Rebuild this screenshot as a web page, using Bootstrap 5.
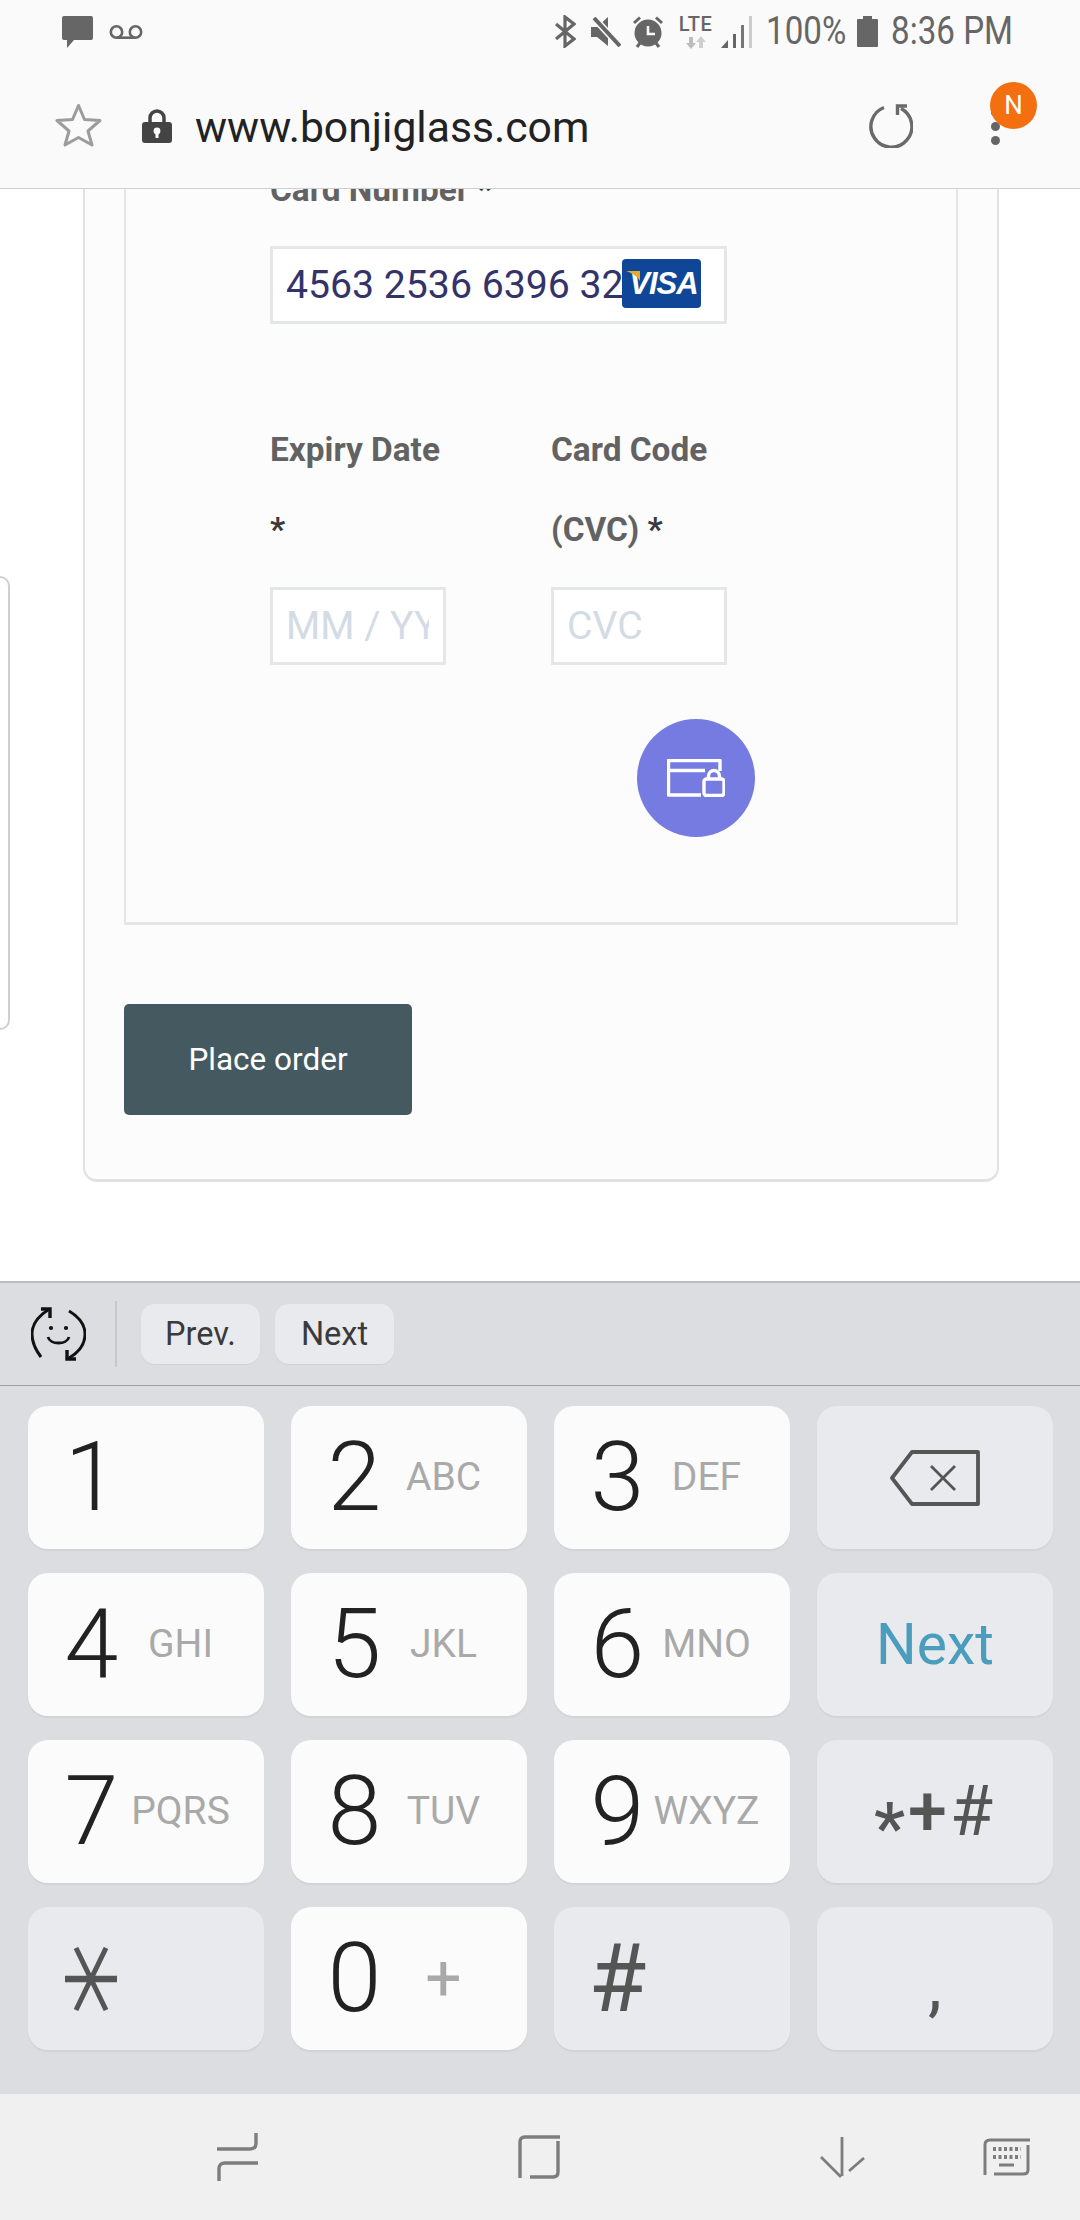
<!DOCTYPE html>
<html lang="en">
<head>
<meta charset="utf-8">
<title>Checkout</title>
<link rel="stylesheet" href="https://cdn.jsdelivr.net/npm/bootstrap@5.3.0/dist/css/bootstrap.min.css">
<script src="https://cdn.jsdelivr.net/npm/bootstrap@5.3.0/dist/js/bootstrap.bundle.min.js"></script>
<style>
html,body{width:1080px;height:2220px;overflow:hidden;margin:0;background:#fff;font-family:Roboto,"Liberation Sans",sans-serif}
.phone{width:1080px;height:2220px}
.chrome-top{height:189px;background:#fafafa;border-bottom:1px solid #cfcfcf}
.statusline{height:63px;padding:0 66px 0 62px}
.sb-text{display:inline-block;font-size:39px;line-height:1;color:#666;transform:scaleX(.85);transform-origin:left center;white-space:nowrap}
.sb-pct{width:79px;margin-left:14px}
.sb-time{width:123px;margin-left:13px}
.lte{width:33px;margin-left:15px}
.lte-word{font-size:20px;font-weight:500;line-height:15px;color:#666;letter-spacing:.6px}
.urlline{height:125px;padding:1px 80px 0 55px}
.star-ico{margin-bottom:2px}
.urltext{font-size:42.7px;color:#222;margin-left:23px;line-height:1;padding-top:3px}
.menu-wrap{width:9px;height:37px;margin-left:78px}
.orangebadge{position:absolute;left:-1px;top:-26px;width:47px;height:47px;background:#f36f10;color:#fff;font-size:26px;font-weight:400}
.viewport{height:1092px;overflow:hidden;background:#fff}
.sliver{width:10px;height:454px;margin-top:387px;border:2px solid #cfcfcf;border-left:0;border-radius:0 12px 12px 0;flex:none}
.outer-box{width:916px;height:1082px;margin:-89px 0 0 73px;background:#fcfcfc;border:2px solid #e2e2e2;border-bottom-width:3px;border-radius:0 0 14px 14px;padding:8px 39px 0;flex:none}
.pay-box{height:815px;border:2px solid #e6e6e6;border-bottom-width:3px;padding:38px 0 0 144px}
.pay-form{width:457px}
.lbl{font-size:33.4px;line-height:80px;font-weight:700;color:#626262;margin:0}
.lbl i{font-style:normal;color:#3a3a3a}
.field{height:78px;border:3px solid #e5e6e8;border-radius:0;background:#fff;font-size:39.2px;color:#33336a;padding:0 14px 0 13px;box-shadow:none}
.field::placeholder{color:#d3dbe4;opacity:1}
.cardfield{margin-top:16px;width:457px}
.visamark{position:absolute;left:352px;top:13px;width:79px;height:49px;background:#0f4697;border-radius:4px;color:#fff;font:italic 700 31px/49px "Liberation Sans",sans-serif;text-align:center;letter-spacing:-1px;padding-left:4px}
.visamark svg{position:absolute;left:4px;top:12px}
.twocol{display:grid;grid-template-columns:176px 176px;column-gap:105px;margin-top:86px}
.twocol .field{margin-top:17px;width:176px}
.lockbtn{width:118px;height:118px;background:#757be0;border-radius:50%;margin:54px 0 0 367px}
.placebtn{width:288px;height:111px;background:#445a60;color:#fff;border:0;border-radius:5px;font-size:31.5px;margin-top:79px;padding:0}
.placebtn:hover{background:#445a60;color:#fff}
.kb-bar{height:105px;background:#dcdde1;border-top:2px solid #bcbdc0;border-bottom:1px solid #9f9f9f;padding-left:31px}
.kb-div{width:2px;height:66px;background:#c6c7ca;margin:0 24px 0 29px}
.kb-chip{height:60px;background:#e9eaee;border-radius:14px;font-size:32.5px;color:#3a3a3a;box-shadow:0 1px 1px #d0d1d5}
.chip-a{width:119px}.chip-b{width:119px;margin-left:15px}
.keypad{height:708px;background:#dcdde1;padding:20px 27px 44px 28px;display:grid;grid-template-columns:repeat(4,236px);grid-auto-rows:143px;column-gap:27px;row-gap:24px}
.k{border-radius:20px;background:#fbfbfb;box-shadow:0 2px 1px #d2d3d7;color:#222}
.k-alt{background:#e9eaee;color:#555}
.dg{width:127px;text-align:center;font-size:97px;font-weight:300;line-height:1}
.lt{width:51px;display:flex;justify-content:center;white-space:nowrap;font-size:39px;color:#a9a9a9;font-weight:400;line-height:1}
.lt-plus{font-size:64px}
.hash{font-weight:400;font-size:94px;color:#555}
.k-next{font-size:57px;color:#4a9dbd}
.k-sym{font-size:70px;letter-spacing:3px}
.k-sym b{display:inline-block;font-weight:500}
.k-sym .low{transform:translateY(17px)}
.k-sym .thin{font-weight:400}
.k-comma{font-size:70px;padding-top:14px}
.navbar-sys{height:126px;background:#f0f0f0}
.ico-recent{margin-left:217px;margin-top:-1px}
.ico-home{margin-left:260px}
.ico-back{margin-left:260px}
.ico-kbd{margin-left:118px}
</style>
</head>
<body>
<div class="phone d-flex flex-column">
  <header class="chrome-top">
    <div class="statusline d-flex align-items-center">
      <svg width="31" height="32" viewBox="0 0 31 32"><path d="M2 0H29a2 2 0 0 1 2 2V22a2 2 0 0 1-2 2H12L5 32V24H2a2 2 0 0 1-2-2V2a2 2 0 0 1 2-2Z" fill="#666"/></svg>
      <svg class="ms-3" width="34" height="14" viewBox="0 0 34 14" fill="none" stroke="#666" stroke-width="2.6"><circle cx="7.5" cy="7" r="5.7"/><circle cx="26.5" cy="7" r="5.7"/><path d="M7.5 12.7H26.5"/></svg>
      <svg class="ms-auto" width="21" height="33" viewBox="0 0 21 33" fill="none" stroke="#666" stroke-width="3.2"><path d="M1 9 19 24 10 31V2L19 9 1 24"/></svg>
      <svg style="margin-left:15px" width="30" height="30" viewBox="0 0 30 30"><path d="M0 10H6L17 0V29L6 20H0Z" fill="#666"/><path d="M3 1 29 29" stroke="#fafafa" stroke-width="7"/><path d="M3 1 29 29" stroke="#666" stroke-width="4"/></svg>
      <svg style="margin-left:11px" width="32" height="32" viewBox="0 0 32 32"><circle cx="16" cy="17" r="13.5" fill="#666"/><path d="M16 10V18H23" fill="none" stroke="#fafafa" stroke-width="2.6"/><path d="M2 7 8 1.500M30 7 24 1.500M5 31 8 27M27 31 24 27" stroke="#666" stroke-width="3"/></svg>
      <div class="lte d-flex flex-column align-items-center" style="margin-top:3px">
        <span class="lte-word">LTE</span>
        <svg class="mt-1" width="20" height="13" viewBox="0 0 20 13"><path d="M5 13 0 7H3V1H7V7H10Z" fill="#bdbdbd"/><path d="M15 0 20 6H17V12H13V6H10Z" fill="#cfcfcf"/></svg>
      </div>
      <svg style="margin-left:9px" width="31" height="32" viewBox="0 0 31 32"><path d="M0 32 7 24V32Z" fill="#666"/><path d="M12 18H15V32H12Z" fill="#666"/><path d="M20 9H23V32H20Z" fill="#777"/><path d="M28 0H31V32H28Z" fill="#ccc"/></svg>
      <span class="sb-text sb-pct">100%</span>
      <svg style="margin-left:12px" width="21" height="31" viewBox="0 0 21 31"><path d="M6 0H15V3H20a1 1 0 0 1 1 1V30a1 1 0 0 1-1 1H1a1 1 0 0 1-1-1V4a1 1 0 0 1 1-1H6Z" fill="#666"/></svg>
      <span class="sb-text sb-time">8:36 PM</span>
    </div>
    <div class="urlline d-flex align-items-center">
      <svg class="star-ico" width="47" height="44" viewBox="0 0 47 44" fill="none" stroke="#9c9c9c" stroke-width="3" stroke-linejoin="round"><path d="M23.500 2.500 29.500 16.500 45 17.500 33 28 37 42 23.500 34.500 10 42 14 28 2 17.500 17.500 16.500Z"/></svg>
      <svg style="margin-left:40px" width="30" height="34" viewBox="0 0 30 34"><path d="M8 14V9a7 7 0 0 1 14 0V14" fill="none" stroke="#444" stroke-width="3.500"/><rect y="13" width="30" height="21" rx="3" fill="#444"/><circle cx="15" cy="22" r="3.400" fill="#fafafa"/><path d="M13.500 23H16.500V29H13.500Z" fill="#fafafa"/></svg>
      <span class="urltext">www.bonjiglass.com</span>
      <svg class="ms-auto" width="45" height="44" viewBox="0 0 45 44" fill="none" stroke="#6a6a6a" stroke-width="3.400"><path d="M16 3.500A20.500 20.500 0 1 0 33 4.500"/><path d="M39 2H29.500V11"/></svg>
      <div class="menu-wrap position-relative d-flex flex-column justify-content-between">
        <svg width="9" height="9" viewBox="0 0 9 9"><circle cx="4.500" cy="4.500" r="4.500" fill="#666"/></svg>
        <svg width="9" height="9" viewBox="0 0 9 9"><circle cx="4.500" cy="4.500" r="4.500" fill="#666"/></svg>
        <svg width="9" height="9" viewBox="0 0 9 9"><circle cx="4.500" cy="4.500" r="4.500" fill="#666"/></svg>
        <span class="orangebadge rounded-circle d-flex align-items-center justify-content-center">N</span>
      </div>
    </div>
  </header>

  <main class="viewport d-flex">
    <div class="sliver"></div>
    <div class="outer-box">
      <div class="pay-box">
        <div class="pay-form">
          <p class="lbl">Card Number <i>*</i></p>
          <div class="position-relative cardfield">
            <input class="form-control field" type="text" value="4563 2536 6396 32" aria-label="Card Number">
            <span class="visamark"><svg width="14" height="10" viewBox="0 0 14 10"><path d="M0 0H14V10C11 5 6 2 0 0Z" fill="#e8a92d"/></svg>VISA</span>
          </div>
          <div class="twocol">
            <p class="lbl">Expiry Date <br><i>*</i></p>
            <p class="lbl">Card Code <br>(CVC) <i>*</i></p>
            <input class="form-control field" type="text" placeholder="MM / YY" aria-label="Expiry Date">
            <input class="form-control field" type="text" placeholder="CVC" aria-label="Card Code">
          </div>
          <div class="lockbtn d-flex align-items-center justify-content-center">
            <svg width="58" height="38" viewBox="0 0 58 38" fill="none" stroke="#fff" stroke-width="3.400" stroke-linejoin="round"><path d="M34 36H1.500V1.500H53V12"/><path d="M1.500 11.500H38"/><rect x="37" y="20" width="20" height="16.500" rx="2.500"/><path d="M41.500 20V17a5.500 5.500 0 0 1 11 0V20"/></svg>
          </div>
        </div>
      </div>
      <button class="btn placebtn d-block" type="button">Place order</button>
    </div>
  </main>

  <div class="kb-bar d-flex align-items-center">
    <svg width="55" height="54" viewBox="0 0 55 54" fill="none" stroke="#111" stroke-width="3"><path d="M17 3C6 10 1 18 1 27 1 35 4 42 10 50"/><path d="M38 4C48 10 54 18 54 27 54 36 50 44 38 51"/><path d="M10 2H19V11" stroke-width="3.400"/><path d="M45 52H36V43" stroke-width="3.400"/><circle cx="20" cy="21" r="2.100" fill="#111" stroke="none"/><circle cx="35" cy="21" r="2.100" fill="#111" stroke="none"/><path d="M17 30C19 38 36 38 38 30" stroke-width="2.800"/></svg>
    <span class="kb-div"></span>
    <span class="kb-chip chip-a d-flex align-items-center justify-content-center">Prev.</span>
    <span class="kb-chip chip-b d-flex align-items-center justify-content-center">Next</span>
  </div>

  <div class="keypad">
    <div class="k d-flex align-items-center"><span class="dg">1</span></div>
    <div class="k d-flex align-items-center"><span class="dg">2</span><span class="lt">ABC</span></div>
    <div class="k d-flex align-items-center"><span class="dg">3</span><span class="lt">DEF</span></div>
    <div class="k k-alt d-flex align-items-center justify-content-center">
      <svg width="90" height="56" viewBox="0 0 90 56" fill="none" stroke="#555" stroke-width="3.800" stroke-linejoin="round"><path d="M22 2H88V54H22L2 28Z"/><path d="M41 16 65 40M65 16 41 40" stroke-width="2.800"/></svg>
    </div>
    <div class="k d-flex align-items-center"><span class="dg">4</span><span class="lt">GHI</span></div>
    <div class="k d-flex align-items-center"><span class="dg">5</span><span class="lt">JKL</span></div>
    <div class="k d-flex align-items-center"><span class="dg">6</span><span class="lt">MNO</span></div>
    <div class="k k-alt k-next d-flex align-items-center justify-content-center">Next</div>
    <div class="k d-flex align-items-center"><span class="dg">7</span><span class="lt">PQRS</span></div>
    <div class="k d-flex align-items-center"><span class="dg">8</span><span class="lt">TUV</span></div>
    <div class="k d-flex align-items-center"><span class="dg">9</span><span class="lt">WXYZ</span></div>
    <div class="k k-alt k-sym d-flex align-items-center justify-content-center"><b class="low">*</b><b>+</b><b class="thin">#</b></div>
    <div class="k k-alt d-flex align-items-center">
      <svg style="margin-left:37px" width="52" height="64" viewBox="0 0 52 64" fill="none" stroke="#555"><path d="M0 32H52" stroke-width="6.500"/><path d="M11 1 41 63M41 1 11 63" stroke-width="5"/></svg>
    </div>
    <div class="k d-flex align-items-center"><span class="dg">0</span><span class="lt lt-plus">+</span></div>
    <div class="k k-alt d-flex align-items-center"><span class="dg hash">#</span></div>
    <div class="k k-alt k-comma d-flex align-items-center justify-content-center">,</div>
  </div>

  <nav class="navbar-sys d-flex align-items-center">
    <svg class="ico-recent" width="41" height="48" viewBox="0 0 41 48" fill="none" stroke="#7d7d7d" stroke-width="3.400"><path d="M39 0V10Q39 16 33 16H0"/><path d="M41 30H8Q2 30 2 36V48"/></svg>
    <svg class="ico-home" width="42" height="44" viewBox="0 0 42 44" fill="none" stroke="#7d7d7d" stroke-width="3.400"><path d="M42 2H7Q2 2 2 7V43"/><path d="M40 6V37Q40 42 35 42H12"/></svg>
    <svg class="ico-back" width="45" height="41" viewBox="0 0 45 41" fill="none" stroke="#7d7d7d" stroke-width="2.800"><path d="M22 0V39M1 20 21 40M44 21 29 34"/></svg>
    <svg class="ico-kbd" width="47" height="39" viewBox="0 0 47 39" fill="none" stroke="#7d7d7d" stroke-width="3"><path d="M47 2H7Q2 2 2 7V37"/><path d="M45 7V32Q45 36 40 36H11"/><path d="M10 11H38M10 19H38" stroke-width="4" stroke-dasharray="3 2.500"/><path d="M16 27H31" stroke-width="3"/></svg>
  </nav>
</div>
</body>
</html>
